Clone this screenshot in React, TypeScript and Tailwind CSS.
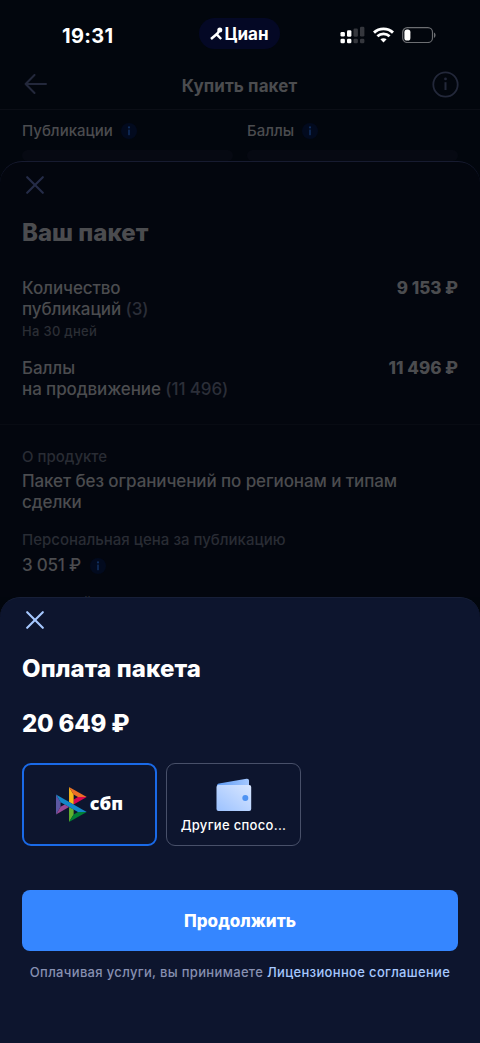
import type { ReactNode } from "react"

function CloseIcon({ className }: { className: string }) {
  return (
    <svg width="18" height="18" viewBox="0 0 18 18" fill="none" strokeLinecap="round" className={className}>
      <path d="M1.2 1.2 16.8 16.8M16.8 1.2 1.2 16.8" stroke="currentColor" strokeWidth="2.1" />
    </svg>
  )
}

function InfoDot() {
  return (
    <span className="flex h-4 w-4 items-center justify-center rounded-full bg-[#020a1e]">
      <svg width="4" height="10" viewBox="0 0 4 10" fill="#112f5e">
        <circle cx="2" cy="1.4" r="1.1" />
        <rect x="1.2" y="3.6" width="1.6" height="5.6" />
      </svg>
    </span>
  )
}

function CianMark() {
  return (
    <svg width="13" height="14" viewBox="0 0 13 14" fill="none">
      <circle cx="9.8" cy="3" r="2.5" fill="white" />
      <path d="M1 12 6.5 7.2 11.2 12M6.4 8 9.4 3.6" stroke="white" strokeWidth="2.5" />
    </svg>
  )
}

function StatusBar() {
  return (
    <div className="flex h-[70px] items-start">
      <span className="ml-[62px] mt-[24px] w-[137px] text-[20px] leading-6 font-bold tracking-[0.3px] text-white">
        19:31
      </span>
      <div className="mt-[18px] flex h-[31px] w-[81px] items-center justify-center rounded-full bg-[#040825]">
        <CianMark />
        <span className="ml-px text-[17px] leading-6 font-bold text-white">Циан</span>
      </div>
      <svg className="mt-[26px] ml-[60px]" width="25" height="18" viewBox="0 0 25 18">
        <g fill="white">
          <rect x="0.5" y="6" width="4.4" height="4.6" rx="1.3" />
          <rect x="0.5" y="12.8" width="4.4" height="4.4" rx="1.3" />
          <rect x="7" y="4.3" width="4.4" height="6.4" rx="1.3" />
          <rect x="7" y="12.8" width="4.4" height="4.4" rx="1.3" />
        </g>
        <g fill="#35373d">
          <rect x="13.5" y="2.5" width="4.4" height="8.2" rx="1.3" />
          <rect x="13.5" y="12.8" width="4.4" height="4.4" rx="1.3" />
          <rect x="20" y="0.8" width="4.4" height="9.8" rx="1.3" />
          <rect x="20" y="12.8" width="4.4" height="4.4" rx="1.3" />
        </g>
      </svg>
      <svg className="mt-[27px] ml-2" width="21" height="16" viewBox="0 0 21 16" fill="none">
        <path d="M1 5.6C6.2.6 14.8.6 20 5.6" stroke="white" strokeWidth="2.9" />
        <path d="M4.4 9.2C7.8 6 13.2 6 16.6 9.2" stroke="white" strokeWidth="2.7" />
        <path d="M10.5 15.4 7.4 12.3C9.1 10.8 11.9 10.8 13.6 12.3Z" fill="white" />
      </svg>
      <svg className="mt-[27px] ml-2" width="34" height="16" viewBox="0 0 34 16" fill="none">
        <rect x="0.7" y="0.7" width="29.8" height="14.8" rx="4.6" stroke="#6c6e72" strokeWidth="1.2" />
        <rect x="2.4" y="2.6" width="6" height="11" rx="2.6" fill="white" />
        <path d="M32 5.4C34 6.2 34 10 32 10.8Z" fill="#6c6e72" />
      </svg>
    </div>
  )
}

function Field({ label }: { label: string }) {
  return (
    <div className="flex flex-1 flex-col">
      <div className="flex items-center gap-2">
        <span className="text-[15px] leading-5 font-medium">{label}</span>
        <InfoDot />
      </div>
      <div className="mt-[9px] h-[42px] rounded-[6px] bg-[#060912]" />
    </div>
  )
}

function Row({ title, count, price }: { title: ReactNode; count: string; price: string }) {
  return (
    <div className="flex items-start justify-between text-[17px] leading-[21px]">
      <p className="font-medium tracking-[-0.1px]">
        {title} <span className="text-[#2b2e38]">({count})</span>
      </p>
      <span className="font-extrabold">{price}</span>
    </div>
  )
}

function SbpLogo() {
  return (
    <svg width="31" height="35" viewBox="0 0 98 120" preserveAspectRatio="none">
      <path d="M0 26.1 14.5 52.1V67.9L0 93.9Z" fill="#5b57a2" />
      <path d="M55.8 42.6 69.4 34.3H97.3L55.8 59.7Z" fill="#d90751" />
      <path d="M55.7 26 55.8 60.4 41.2 51.4V0Z" fill="#fab718" />
      <path d="M97.3 34.3H69.4L55.7 26 41.2 0Z" fill="#ed6f26" />
      <path d="M55.8 94V77.3L41.2 68.5V120Z" fill="#63b22f" />
      <path d="M69.4 85.7 14.5 52.1 0 26.1 97.2 85.7Z" fill="#1487c9" />
      <path d="M41.2 120 55.8 94 69.4 85.7H97.2Z" fill="#017f36" />
      <path d="M0 93.9 41.3 68.5 27.5 60 14.5 67.9Z" fill="#984995" />
    </svg>
  )
}

function WalletIcon() {
  return (
    <svg width="36" height="34" viewBox="0 0 36 34">
      <defs>
        <linearGradient id="walletFront" x1="0" y1="1" x2="1" y2="0">
          <stop offset="0" stopColor="#9cc2ff" />
          <stop offset="1" stopColor="#d8e6ff" />
        </linearGradient>
        <linearGradient id="walletBack" x1="0" y1="0" x2="1" y2="0">
          <stop offset="0" stopColor="#5d9bf5" />
          <stop offset="1" stopColor="#a5c8ff" />
        </linearGradient>
      </defs>
      <path d="M1 7.8C1 6.6 1.6 5.8 3 5.5L30.5.7C32 .4 33 1.2 33 2.6V9H1Z" fill="url(#walletBack)" />
      <rect x="0.5" y="7" width="34.7" height="26" rx="2" fill="url(#walletFront)" />
      <circle cx="29.3" cy="20" r="3" fill="#4f93f2" />
    </svg>
  )
}

export default function App() {
  return (
    <div
      className="flex h-[1043px] w-[480px] flex-col overflow-hidden bg-[#02060d] text-[#4b4c4f]"
      style={{ fontFamily: 'Inter, "Noto Sans", sans-serif' }}
    >
      <StatusBar />

      <header className="flex h-10 shrink-0 items-center justify-between border-b border-[#0b0e16] pr-[21px] pl-6">
        <svg className="-mt-3" width="23" height="20" viewBox="0 0 23 20" fill="none" stroke="#23283b" strokeWidth="2">
          <path d="M10.5 1 1.6 10 10.5 19M1.6 10H22" strokeLinecap="round" strokeLinejoin="round" />
        </svg>
        <h1 className="-mt-[7px] text-[17px] leading-6 font-bold tracking-[0.1px]">Купить пакет</h1>
        <svg className="-mt-[10px]" width="27" height="27" viewBox="0 0 27 27" fill="none">
          <circle cx="13.5" cy="13.5" r="12.2" stroke="#23283a" strokeWidth="1.8" />
          <circle cx="13.5" cy="7.9" r="1.4" fill="#23283a" />
          <path d="M13.5 11.2V19" stroke="#23283a" strokeWidth="2" />
        </svg>
      </header>

      <div className="flex h-[51px] shrink-0 gap-[14px] overflow-hidden px-[22px] pt-[11px]">
        <Field label="Публикации" />
        <Field label="Баллы" />
      </div>

      {/* Package sheet */}
      <section className="flex h-[436px] shrink-0 flex-col overflow-hidden rounded-t-[22px] border-t border-[#171b30] bg-[#03060e]">
        <div className="px-[22px]">
          <CloseIcon className="mt-[14px] ml-1 text-[#252c48]" />
          <h2 className="mt-[24px] text-[24px] leading-[30px] font-extrabold">Ваш пакет</h2>
          <div className="mt-[30px]">
            <Row
              title={
                <>
                  Количество
                  <br />
                  публикаций
                </>
              }
              count="3"
              price="9 153 ₽"
            />
            <p className="mt-[3px] text-[13px] leading-4 font-medium tracking-[0.3px] text-[#2b2e35]">На 30 дней</p>
          </div>
          <div className="mt-[19px]">
            <Row
              title={
                <>
                  Баллы
                  <br />
                  на продвижение
                </>
              }
              count="11 496"
              price="11 496 ₽"
            />
          </div>
        </div>
        <div className="mt-[24px] border-t border-[#080b13] px-[22px] pt-[22px]">
          <p className="text-[15px] leading-5 font-medium text-[#292c34]">О продукте</p>
          <p className="mt-1 text-[17px] leading-[21px] font-medium tracking-[-0.1px]">
            Пакет без ограничений по регионам и типам сделки
          </p>
          <p className="mt-[17px] text-[15px] leading-5 font-medium text-[#292c34]">Персональная цена за публикацию</p>
          <div className="mt-[5px] flex items-center gap-[9px]">
            <span className="text-[17px] leading-[21px] font-medium tracking-[-0.2px]">3 051 ₽</span>
            <InfoDot />
          </div>
          <p className="mt-[17px] text-[15px] leading-5 font-medium text-[#292c34]">Обычный</p>
        </div>
      </section>

      {/* Payment sheet */}
      <section className="flex flex-1 flex-col rounded-t-[20px] border-t border-[#171f38] bg-[#0d152e] px-[22px] text-white">
        <CloseIcon className="mt-[13px] ml-1 text-[#a6c8ff]" />
        <h2 className="mt-[25px] text-[24px] leading-[30px] font-extrabold tracking-[0.1px]">Оплата пакета</h2>
        <p className="mt-[25px] text-[24px] leading-[30px] font-extrabold tracking-[-0.2px]">20 649 ₽</p>

        <div className="mt-[24px] flex gap-[9px]">
          <button className="flex h-[83px] w-[135px] items-center justify-center gap-[3px] rounded-[9px] border-2 border-[#1a6ae8]">
            <SbpLogo />
            <span className="-mt-1 font-['Open_Sans'] text-[18px] leading-6 font-extrabold">сбп</span>
          </button>
          <button className="flex h-[83px] w-[135px] flex-col items-center rounded-[9px] border border-[#485069] pt-[14px]">
            <WalletIcon />
            <span className="mt-[3px] text-[13px] leading-5 font-medium tracking-[0.3px] whitespace-nowrap">
              Другие спосо...
            </span>
          </button>
        </div>

        <button className="mt-[44px] h-[61px] rounded-[8px] bg-[#3586ff] text-[17px] leading-6 font-extrabold">
          Продолжить
        </button>
        <p className="mt-3 text-center text-[13px] leading-[18px] font-medium tracking-[0.33px] whitespace-nowrap text-[#8790b1]">
          Оплачивая услуги, вы принимаете <span className="text-[#a6c8ff]">Лицензионное соглашение</span>
        </p>
      </section>
    </div>
  )
}
